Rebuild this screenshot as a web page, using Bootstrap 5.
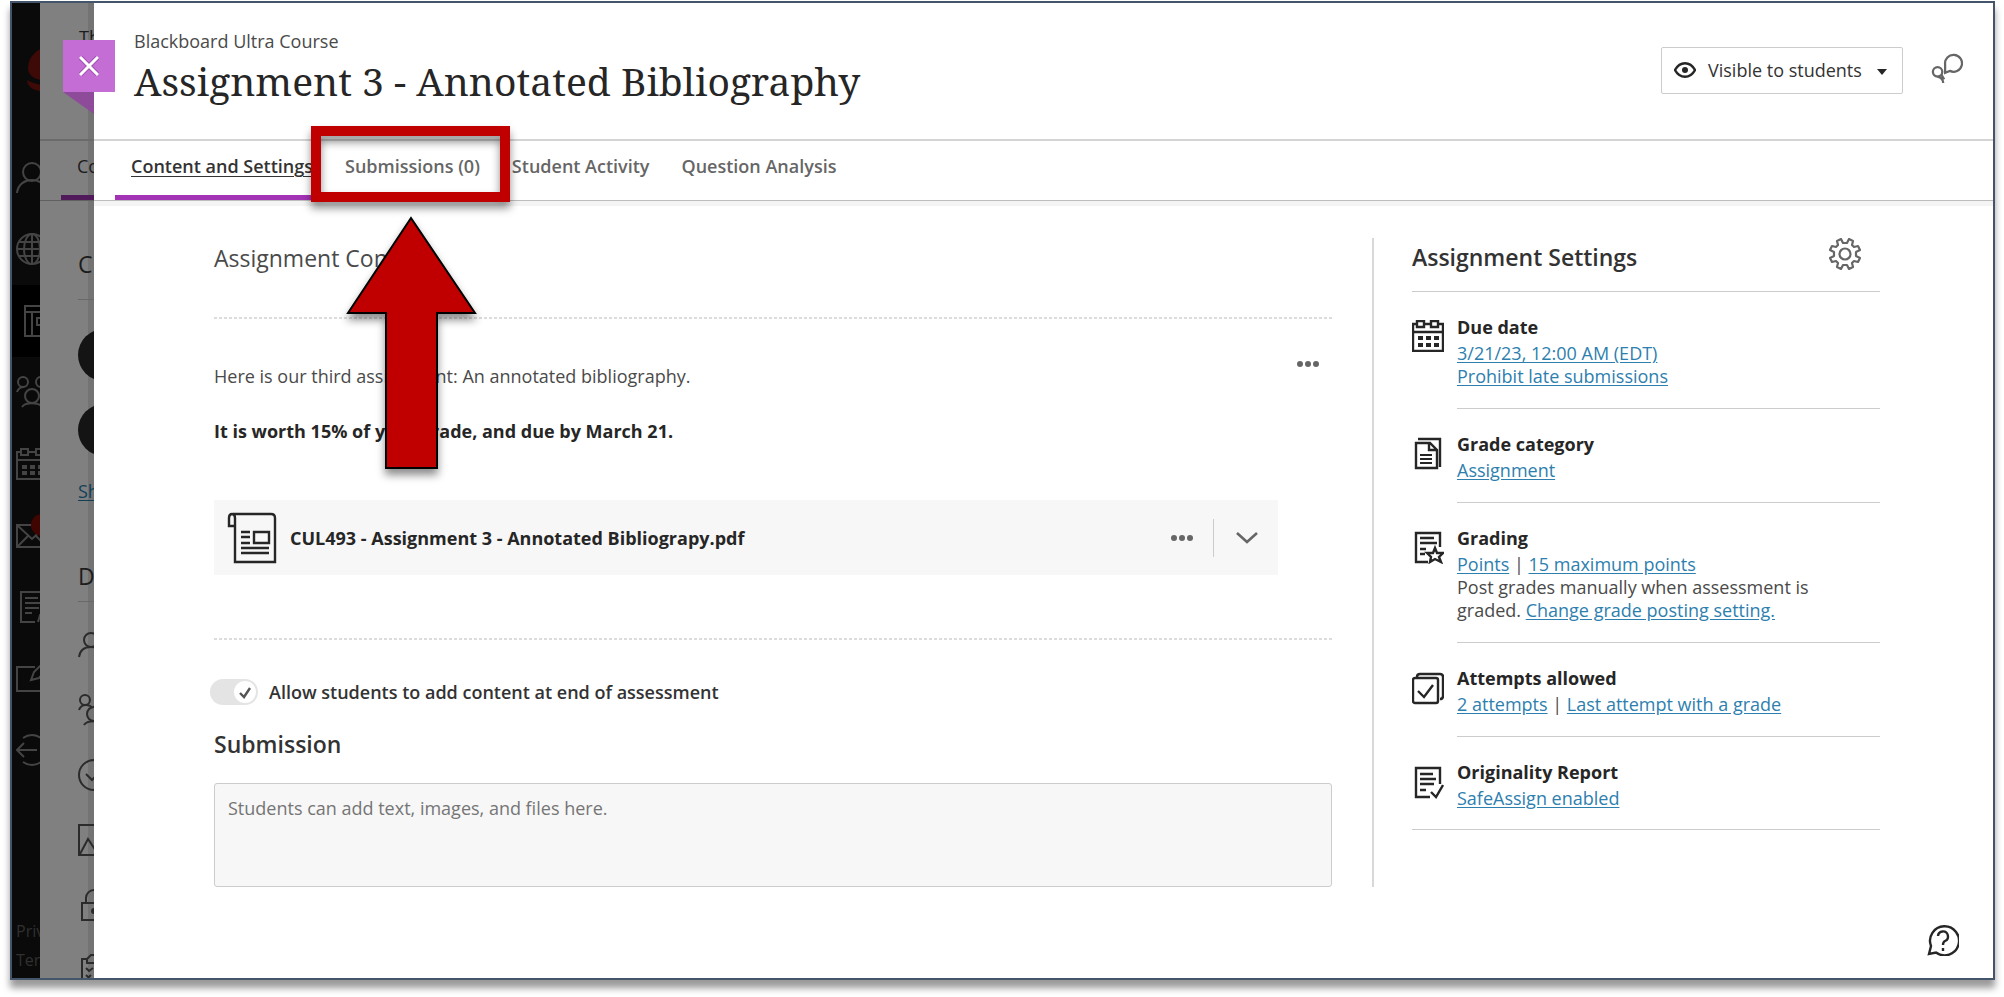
<!DOCTYPE html>
<html lang="en">
<head>
<meta charset="utf-8">
<meta name="viewport" content="width=device-width, initial-scale=1">
<title>Assignment 3 - Annotated Bibliography</title>
<link href="https://cdn.jsdelivr.net/npm/bootstrap@5.3.0/dist/css/bootstrap.min.css" rel="stylesheet">
<style>
  body { font-family: "Open Sans", "Noto Sans", sans-serif; font-size: 18px; line-height: 24px; color: #4a4a4a; background: #fff; padding: 1px 9px 17px 10px; }
  a { color: #2d80ae; text-underline-offset: 2px; }
  svg { display: block; fill: none; stroke: currentColor; stroke-width: 2; flex: none; }
  .frame { border: 2px solid #44546a; box-shadow: 0 8px 7px rgba(0,0,0,.4); }
  .ink { color: #262626; }
  /* global navigation rail, dimmed; never taller than the panel */
  .rail { width: 28px; background: #0a0a0a; color: #3f3f3f; flex: none; contain: size; }
  .rail-logo { height: 139px; padding: 43px 0 0 14px; }
  .rail-logo svg { stroke: none; fill: #3d0a08; }
  .rail-list { height: 644px; }
  .rail-list a { flex: 1; color: #444; padding-left: 4px; }
  .rail-list a.current { background: #000; }
  .rail-legal { padding: 131px 0 0 4px; font-size: 16px; line-height: 29px; }
  .rail-legal a { color: #303030; text-decoration: none; }
  .dot-alert { left: 19px; top: 14px; width: 22px; height: 22px; background: #400500; border-radius: 50%; }
  /* course page behind the open panel, dimmed */
  .under { width: 54px; background: linear-gradient(90deg, #808080 48px, #737373 48px); color: #1c1c1c; flex: none; contain: size; }
  .under-head { height: 138px; border-bottom: 2px solid #6a6a6a; padding: 22px 0 0 39px; }
  .under-tab { height: 60px; border-bottom: 1px solid #606060; padding: 13px 0 0 37px; }
  .under-tab::after { content: ""; display: block; height: 5px; margin: 17px 0 0 -16px; background: #511a5b; }
  .under-body { padding: 48px 0 0 38px; }
  .under-body h2 { border-bottom: 1px solid #686868; }
  .under-first { padding-bottom: 20px; margin-bottom: 29px; }
  .under-second { padding-bottom: 10px; margin: 58px 0 10px; }
  .disc { width: 52px; height: 52px; border-radius: 50%; background: #141414; margin-bottom: 23px; }
  .under-list span { height: 65px; color: #2b2b2b; }
  .under-link { color: #123f58; }
  /* panel */
  .panel-main { min-width: 0; }
  .panel-head { height: 138px; padding: 25px 30px 0 40px; border-bottom: 2px solid #d4d4d4; }
  .course-name { line-height: 26px; }
  .panel-title { font-family: "Noto Serif", "DejaVu Serif Condensed", "DejaVu Serif", serif; font-size: 39px; line-height: 46px; font-weight: 400; margin: 4px 0 0; }
  .close-tab { left: -31px; top: 37px; width: 52px; height: 52px; background: #c46dd5; border: 0; padding: 0; color: #fff; z-index: 2; }
  .close-fold { left: -31px; top: 89px; width: 31px; height: 22px; background: #8e4b9a; clip-path: polygon(0 0, 100% 0, 100% 100%); }
  .visibility { height: 47px; width: 242px; margin-top: 19px; padding: 0 15px 2px 12px; border: 1px solid #ccc; border-radius: 2px; background: #fff; color: #333; font-size: 18px; }
  .bare { border: 0; background: none; padding: 0; color: #666; }
  .tabs { padding-left: 21px; border-bottom: 1px solid #bdbdbd; box-shadow: 0 5px #f4f4f4; }
  .tabs .nav-link { padding: 13px 16px 17px; border-bottom: 5px solid transparent; color: #666; font-weight: 600; }
  .tabs .nav-link.active { color: #333; border-color: #a333b5; text-decoration: underline; text-underline-offset: 3px; text-decoration-thickness: 1px; }
  .callout { left: -18px; right: -14px; top: -15px; height: 76px; border: 10px solid #c00000; filter: drop-shadow(0 6px 4px rgba(0,0,0,.45)); z-index: 3; pointer-events: none; }
  .arrow { left: 17px; top: 74px; z-index: 3; filter: drop-shadow(0 6px 4px rgba(0,0,0,.45)); pointer-events: none; }
  .panel-body { padding: 37px 113px 0 120px; }
  .content-col { min-width: 0; margin-right: 40px; padding-top: 5px; }
  h2 { font-size: 23px; line-height: 30px; margin: 0; font-weight: 400; }
  .semi { font-weight: 600; }
  .panel-body h2.semi, .panel-body label.semi { color: #333; }
  .dashed { background: repeating-linear-gradient(90deg, #dcdcdc 0 3px, transparent 3px 5px) top left / 100% 2px no-repeat; }
  .block { margin-top: 44px; padding-top: 35px; }
  .prose { padding-top: 12px; }
  .prose p { margin: 0 0 31px; }
  .dots { width: 22px; height: 24px; margin-right: 13px; }
  .file-row { background: #f7f7f7; height: 75px; margin: 26px 54px 0 0; padding: 0 20px 0 13px; }
  .file-name { padding-left: 13px; }
  .file-rule { width: 1px; height: 38px; background: #ccc; margin: 0 22px 0 20px; }
  .after { margin-top: 63px; padding-top: 41px; }
  .toggle { appearance: none; width: 48px; height: 26px; border-radius: 13px; margin: 0 11px 0 -4px; background: #e4e4e4 url("data:image/svg+xml,%3Csvg xmlns='http://www.w3.org/2000/svg' viewBox='0 0 48 26'%3E%3Crect x='24' y='2' width='22' height='22' rx='11' fill='%23fff'/%3E%3Cpath d='M30 14l4 4 6-9' fill='none' stroke='%23555' stroke-width='2.4'/%3E%3C/svg%3E"); }
  .answer { height: 104px; background: #f7f7f7; border: 1px solid #ccc; border-radius: 3px; padding: 12px 13px; resize: none; margin-top: 24px; }
  .answer::placeholder { color: #757575; }
  .settings { width: 508px; flex: none; border-left: 2px solid #d8d8d8; padding-left: 38px; }
  .settings-head { height: 54px; border-bottom: 1px solid #ccc; padding-right: 19px; }
  .settings-head h2 { margin-top: 4px; }
  .setting { gap: 13px; line-height: 23px; color: #262626; }
  .setting svg { margin-top: 28px; }
  .setting-text { flex: 1; padding: 24px 0 20px; border-bottom: 1px solid #ccc; color: #4a4a4a; }
  .setting-text p { margin: 0 50px 0 0; }
  .setting-text h3 { font-size: 18px; line-height: 23px; margin: 0 0 3px; font-weight: 700; color: #262626; }
  .setting:last-child { border-bottom: 1px solid #ccc; }
  .setting:last-child .setting-text { border: 0; padding-bottom: 19px; }
  .help { right: 34px; bottom: 22px; color: #262626; }
</style>
</head>
<body class="min-vh-100 d-flex flex-column">
<div class="frame flex-grow-1 d-flex position-relative">

  <nav class="rail overflow-hidden" aria-label="Global">
    <div class="rail-logo"><svg width="46" height="50" viewBox="0 0 46 50"><path d="M32 2C14-3 2 10 2 22c0 8 8 12 15 12H40V8z"/><path d="M1 34c8 5 20 6 30 6l-5 6C12 46 2 44 1 34z"/></svg></div>
    <div class="rail-list d-flex flex-column">
      <a href="#" class="d-flex align-items-center" aria-label="Profile"><svg width="32" height="32" viewBox="0 0 32 32"><circle cx="16" cy="10" r="9"/><path d="M1 31c1-9 8-13 15-13s14 4 15 13"/></svg></a>
      <a href="#" class="d-flex align-items-center" aria-label="Institution"><svg width="32" height="32" viewBox="0 0 32 32"><circle cx="16" cy="16" r="15"/><ellipse cx="16" cy="16" rx="8" ry="15"/><path d="M16 1v30M1 16h30M3 9h26M3 23h26"/></svg></a>
      <a href="#" class="d-flex align-items-center current" aria-label="Courses"><svg class="ms-2" width="32" height="32" viewBox="0 0 32 32"><path d="M1 1h28v30H1zM1 7h28M8 7v24M13 13h11v7H13z"/></svg></a>
      <a href="#" class="d-flex align-items-center" aria-label="Organizations"><svg width="32" height="32" viewBox="0 0 32 32"><circle cx="7" cy="6" r="5"/><circle cx="25" cy="6" r="5"/><circle cx="16" cy="20" r="7"/><path d="M1 16c1-3 3-5 7-5M31 16c-1-3-3-5-7-5M6 31c3-5 17-5 20 0"/></svg></a>
      <a href="#" class="d-flex align-items-center" aria-label="Calendar"><svg width="32" height="32" viewBox="0 0 32 32"><path d="M5 4H1v27h30V4h-4M12 4h8M1 12h30M5 1h7v6H5zM20 1h7v6h-7z"/><path stroke-width="4" stroke-dasharray="5 3" d="M6 19h22M6 25h22"/></svg></a>
      <a href="#" class="d-flex align-items-center position-relative" aria-label="Messages"><svg width="32" height="24" viewBox="0 0 32 24"><path d="M1 1h30v22H1zM1 1l15 14L31 1M1 23l11-11M31 23L20 12"/></svg><span class="dot-alert position-absolute"></span></a>
      <a href="#" class="d-flex align-items-center" aria-label="Grades"><svg class="ms-1" width="32" height="32" viewBox="0 0 32 32"><path d="M15 31H1V1h24v14M5 7h13M5 12h15M5 17h14M5 22h7M18 31l2-7 9-9"/></svg></a>
      <a href="#" class="d-flex align-items-center" aria-label="Tools"><svg width="32" height="28" viewBox="0 0 32 28"><path d="M19 2H1v24h28V14M15 15l3-8 7-7 5 5-7 8z"/></svg></a>
      <a href="#" class="d-flex align-items-center" aria-label="Sign out"><svg width="32" height="32" viewBox="0 0 32 32"><path d="M7 4a15 15 0 0 1 18 0M7 28a15 15 0 0 0 18 0M21 16H1M8 9l-7 7 7 7"/></svg></a>
    </div>
    <div class="rail-legal text-nowrap"><a class="d-block" href="#">Priv</a><a class="d-block" href="#">Ter</a></div>
  </nav>

  <div class="under overflow-hidden text-nowrap" aria-hidden="true">
    <div class="under-head">Th</div>
    <div class="under-tab">Co</div>
    <div class="under-body">
      <h2 class="under-first">C</h2>
      <div class="disc"></div>
      <div class="disc"></div>
      <div><a class="under-link" href="#" tabindex="-1">Sh</a></div>
      <h2 class="under-second">D</h2>
      <div class="under-list d-flex flex-column">
        <span class="d-flex align-items-center"><svg width="26" height="26" viewBox="0 0 26 26"><circle cx="13" cy="8" r="7"/><path d="M1 25c1-7 6-10 12-10s11 3 12 10"/></svg></span>
        <span class="d-flex align-items-center"><svg width="32" height="32" viewBox="0 0 32 32"><circle cx="7" cy="6" r="5"/><circle cx="16" cy="20" r="7"/><path d="M1 16c1-3 3-5 7-5s5 1 6 3M6 31c3-5 17-5 20 0"/></svg></span>
        <span class="d-flex align-items-center"><svg width="32" height="32" viewBox="0 0 32 32"><circle cx="16" cy="16" r="15"/><path d="M8 15l6 6 10-10"/></svg></span>
        <span class="d-flex align-items-center"><svg width="32" height="32" viewBox="0 0 32 32"><path d="M1 1h30v30H1zM2 30l8-15 10 15"/></svg></span>
        <span class="d-flex align-items-center"><svg width="32" height="32" viewBox="0 0 32 32"><path d="M4 14h24v17H4zM8 14V9a8 8 0 0 1 16 0"/><circle cx="16" cy="22" r="2" fill="currentColor"/></svg></span>
        <span class="d-flex align-items-center"><svg width="32" height="32" viewBox="0 0 32 32"><path d="M9 5H4v26h24V5h-5M9 9V5l4-4h6l4 4v4zM8 14l3 3 4-3M8 21l5 5M13 21l-5 5"/></svg></span>
      </div>
    </div>
  </div>

  <main class="panel-main flex-grow-1 position-relative bg-white">
    <span class="close-fold position-absolute"></span>
    <button class="close-tab position-absolute d-flex align-items-center justify-content-center" type="button" aria-label="Close"><svg width="20" height="20" viewBox="0 0 20 20"><path stroke="#a24fb3" stroke-width="5" d="M1 1l18 18M19 1L1 19"/><path stroke-width="3" d="M1 1l18 18M19 1L1 19"/></svg></button>

    <header class="panel-head d-flex justify-content-between">
      <div>
        <div class="course-name">Blackboard Ultra Course</div>
        <h1 class="panel-title ink text-nowrap">Assignment 3 - Annotated Bibliography</h1>
      </div>
      <div class="d-flex align-items-start">
        <button class="visibility d-flex align-items-center" type="button"><svg class="ink" width="22" height="16" viewBox="0 0 22 16"><path stroke-width="2.4" d="M1 8C6-1 16-1 21 8 16 17 6 17 1 8z"/><circle cx="11" cy="8" r="3" fill="currentColor" stroke="none"/></svg><span class="flex-grow-1 text-start ps-2 ms-1 text-nowrap">Visible to students</span><svg class="ink mt-1" width="10" height="6" viewBox="0 0 10 6"><path fill="currentColor" stroke="none" d="M0 0h10L5 6z"/></svg></button>
        <button class="bare ms-4 mt-4 ps-1" type="button" aria-label="Class conversations"><svg width="32" height="34" viewBox="0 0 34 34"><path stroke-width="2.4" d="M15 21V12a9 9 0 1 1 5 7z"/><circle cx="7" cy="20" r="5" stroke-width="2.4"/><path stroke-width="2.4" d="M7 25c4 1 6 3 6 7M11 23l3 5"/></svg></button>
      </div>
    </header>

    <ul class="nav tabs flex-nowrap text-nowrap">
      <li><a class="nav-link active" href="#">Content and Settings</a></li>
      <li class="position-relative"><a class="nav-link" href="#">Submissions (0)</a>
        <span class="callout position-absolute"></span>
        <svg class="arrow position-absolute" width="132" height="258" viewBox="0 0 132 258"><path fill="#c00000" stroke="#000" d="M65 3L129 98H91V253H40V98H2z"/></svg>
      </li>
      <li><a class="nav-link" href="#">Student Activity</a></li>
      <li><a class="nav-link" href="#">Question Analysis</a></li>
    </ul>

    <div class="panel-body d-flex">
      <section class="content-col flex-grow-1">
        <h2>Assignment Content</h2>
        <div class="block dashed">
          <div class="d-flex justify-content-between align-items-start">
            <div class="prose"><p>Here is our third assignment: An annotated bibliography.</p><p class="fw-bold ink">It is worth 15% of your grade, and due by March 21.</p></div>
            <button class="bare dots" type="button" aria-label="More options"><svg width="22" height="24" viewBox="0 0 22 24"><g fill="currentColor" stroke="none"><circle cx="3" cy="12" r="3"/><circle cx="11" cy="12" r="3"/><circle cx="19" cy="12" r="3"/></g></svg></button>
          </div>
          <div class="file-row d-flex align-items-center">
            <svg class="ink" width="50" height="52" viewBox="0 0 50 52"><path stroke-width="2.4" d="M6 2h38q4 0 4 4v44H8V14H2V6q0-4 3-4t3 4v8M27 20h15v11H27z"/><path stroke-width="2.4" d="M14 20h9M14 25h9M14 31h9M14 36h28M14 41h28"/></svg>
            <span class="file-name fw-bold ink flex-grow-1 text-nowrap">CUL493 - Assignment 3 - Annotated Bibliograpy.pdf</span>
            <button class="bare" type="button" aria-label="File options"><svg width="22" height="24" viewBox="0 0 22 24"><g fill="currentColor" stroke="none"><circle cx="3" cy="12" r="3"/><circle cx="11" cy="12" r="3"/><circle cx="19" cy="12" r="3"/></g></svg></button>
            <span class="file-rule"></span>
            <button class="bare" type="button" aria-label="Expand file"><svg width="22" height="12" viewBox="0 0 22 12"><path stroke-width="2.6" d="M1 1l10 9L21 1"/></svg></button>
          </div>
        </div>
        <div class="after dashed">
          <div class="d-flex align-items-center"><input class="toggle" type="checkbox" role="switch" id="allow" checked><label class="semi" for="allow">Allow students to add content at end of assessment</label></div>
          <h2 class="semi mt-4"><label for="answer">Submission</label></h2>
          <textarea class="answer d-block w-100" id="answer" placeholder="Students can add text, images, and files here."></textarea>
        </div>
      </section>

      <aside class="settings">
        <div class="settings-head d-flex justify-content-between align-items-start">
          <h2 class="semi">Assignment Settings</h2>
          <button class="bare" type="button" aria-label="Edit settings"><svg width="32" height="32" viewBox="-16 -16 32 32"><path stroke-width="2.2" stroke-linejoin="round" d="M-2-11L-4-15-8-13-7-9-9-7-13-8-15-4-11-2V2L-15 4-13 8-9 7-7 9-8 13-4 15-2 11H2L4 15 8 13 7 9 9 7 13 8 15 4 11 2V-2L15-4 13-8 9-7 7-9 8-13 4-15 2-11z"/><circle r="5.5" stroke-width="2.2"/></svg></button>
        </div>
        <div>
          <div class="setting d-flex"><svg width="32" height="32" viewBox="0 0 32 32"><path stroke-width="2.4" d="M5 4H1v27h30V4h-4M12 4h7M1 12h30M5 1h7v6H5zM19 1h7v6h-7z"/><path stroke-width="4" stroke-dasharray="5 3" d="M6 18h22M6 25h22"/></svg>
            <div class="setting-text"><h3>Due date</h3><a href="#">3/21/23, 12:00 AM (EDT)</a><br><a href="#">Prohibit late submissions</a></div></div>
          <div class="setting d-flex"><svg width="32" height="33" viewBox="0 0 32 33"><path stroke-width="2.4" d="M6 2h22v28M4 6h14l7 7v18H4zM17 6v7h7"/><path d="M8 18h12M8 22h12M8 26h12"/></svg>
            <div class="setting-text"><h3>Grade category</h3><a href="#">Assignment</a></div></div>
          <div class="setting d-flex"><svg width="32" height="33" viewBox="0 0 32 33"><path stroke-width="2.4" d="M16 31H4V2h24v14M8 7h14M8 12h17M8 18h6M8 23h5"/><path stroke-width="2.4" d="M23 17l2 5 6 0-4 4 2 5-6-3-5 3 1-5-4-4h6z"/></svg>
            <div class="setting-text"><h3>Grading</h3><a href="#">Points</a> | <a href="#">15 maximum points</a><p>Post grades manually when assessment is graded. <a href="#">Change grade posting setting.</a></p></div></div>
          <div class="setting d-flex"><svg width="32" height="34" viewBox="0 0 32 34"><rect x="1" y="7" width="25" height="25" rx="2" stroke-width="2.4"/><path stroke-width="2.4" d="M5 6q0-3 3-3h20q3 0 3 3v19q0 3-3 3M6 20l6 6 9-12"/></svg>
            <div class="setting-text"><h3>Attempts allowed</h3><a href="#">2 attempts</a> | <a href="#">Last attempt with a grade</a></div></div>
          <div class="setting d-flex"><svg width="32" height="34" viewBox="0 0 32 34"><path stroke-width="2.4" d="M18 32H4V3h24v16M8 9h13M8 14h16M8 19h14M8 25h6M19 27l5 5 7-12"/></svg>
            <div class="setting-text"><h3>Originality Report</h3><a href="#">SafeAssign enabled</a></div></div>
        </div>
      </aside>
    </div>
    <button class="bare help position-absolute" type="button" aria-label="Help"><svg width="32" height="32" viewBox="0 0 32 32"><path stroke-width="2.4" d="M2 30l2-8A14.500 14.500 0 1 1 9 28.500z"/><path stroke-width="2.4" d="M11 12a5 5 0 1 1 7 5q-2 1-2 4M16 24v3"/></svg></button>
  </main>
</div>
<script src="https://cdn.jsdelivr.net/npm/bootstrap@5.3.0/dist/js/bootstrap.bundle.min.js"></script>
</body>
</html>
